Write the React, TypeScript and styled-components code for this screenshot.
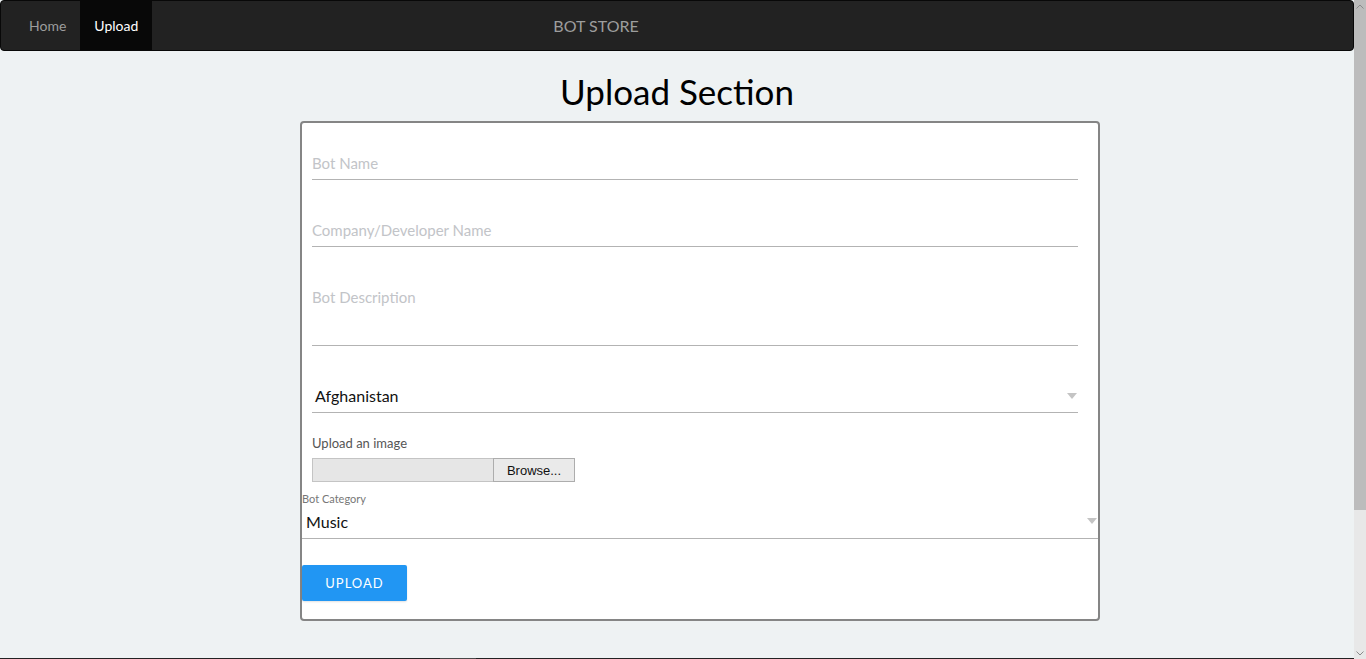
import React from 'react';
import styled, { createGlobalStyle } from 'styled-components';

const GlobalStyle = createGlobalStyle`
  body {
    margin: 0;
    background: #eef2f3;
    font-family: Lato, "Liberation Sans", sans-serif;
    color: #222;
  }
  * {
    box-sizing: border-box;
  }
`;

const Page = styled.div`
  margin-right: 12px;
`;

// page scrollbar, drawn since the browser hides native ones
const ScrollTrack = styled.div`
  position: fixed;
  top: 0;
  right: 0;
  width: 12px;
  height: 100vh;
  background: #e8e8e8;
  display: flex;
  flex-direction: column;
  justify-content: space-between;
`;

const ScrollThumb = styled.div`
  height: 510px;
  background: #bcbcbc;
  display: flex;
  justify-content: center;
  padding-top: 4px;
`;

const ScrollArrow = styled.div`
  display: flex;
  justify-content: center;
  padding-bottom: 3px;
`;

const Navbar = styled.nav`
  display: flex;
  align-items: stretch;
  height: 51px;
  background: #222;
  border: 1px solid #080808;
  border-radius: 4px;
`;

const NavLinks = styled.ul`
  display: flex;
  list-style: none;
  margin: 0;
  padding: 0 0 0 14px;
`;

const NavLink = styled.li<{ active?: boolean }>`
  display: flex;
  align-items: center;
  padding: 0 14px;
  font-size: 14px;
  color: ${(p) => (p.active ? '#fff' : '#9d9d9d')};
  background: ${(p) => (p.active ? '#080808' : 'transparent')};
`;

const Brand = styled.div`
  display: flex;
  align-items: center;
  margin-left: 401px;
  font-size: 16px;
  color: #9d9d9d;
`;

const Main = styled.main`
  display: flex;
  flex-direction: column;
  align-items: center;
  padding-bottom: 37px;
`;

const Title = styled.h1`
  margin: 20px 0 10px;
  font-size: 35px;
  font-weight: 400;
  line-height: 40px;
  color: #000;
`;

const FormRow = styled.div`
  padding-left: 46px;
`;

const FormCard = styled.form`
  width: 800px;
  background: #fff;
  border: 2px solid #858585;
  border-radius: 4px;
  padding: 11px 0 18px;
`;

const Padded = styled.div`
  padding: 0 20px 0 10px;
`;

const Field = styled.div<{ tall?: boolean }>`
  height: ${(p) => (p.tall ? '78px' : '46px')};
  margin-bottom: 21px;
  border-bottom: 1px solid #b3b3b3;
`;

const TextInput = styled.input`
  width: 100%;
  height: 45px;
  border: none;
  outline: none;
  padding: 18px 0 5px;
  font: inherit;
  font-size: 15px;
  line-height: 22px;
  background: transparent;
  &::placeholder {
    color: #c2c4c8;
  }
`;

const TextArea = styled.textarea`
  width: 100%;
  height: 77px;
  border: none;
  outline: none;
  resize: none;
  padding: 18px 0 5px;
  font: inherit;
  font-size: 15px;
  line-height: 22px;
  background: transparent;
  &::placeholder {
    color: #c2c4c8;
  }
`;

const SelectBox = styled.div<{ inset?: number; compact?: boolean }>`
  display: flex;
  align-items: center;
  justify-content: space-between;
  height: ${(p) => (p.compact ? '33px' : '46px')};
  padding: ${(p) => (p.compact ? '3px' : '17px')} 0 5px ${(p) => p.inset ?? 3}px;
  border-bottom: 1px solid #b3b3b3;
  font-size: 16px;
  color: #111;
`;

const Caret = styled.span`
  width: 0;
  height: 0;
  margin-right: 1px;
  border-left: 5px solid transparent;
  border-right: 5px solid transparent;
  border-top: 6px solid #c4c4c4;
`;

const Label = styled.label`
  display: block;
  margin: 22px 0 7px;
  font-size: 13px;
  color: #555;
`;

const FileRow = styled.div`
  display: flex;
  height: 24px;
  margin-bottom: 10px;
`;

const FilePath = styled.div`
  width: 181px;
  background: #e6e6e6;
  border: 1px solid #c4c4c4;
  border-right: none;
`;

const BrowseButton = styled.button`
  width: 82px;
  background: #eaeaea;
  border: 1px solid #adadad;
  font-family: "Liberation Sans", Arial, sans-serif;
  font-size: 13px;
  color: #111;
  padding: 0;
`;

const SmallLabel = styled.div`
  font-size: 11px;
  color: #777;
  line-height: 14px;
`;

const CategoryBlock = styled.div`
  margin-bottom: 26px;
`;

const UploadButton = styled.button`
  width: 105px;
  height: 36px;
  border: none;
  border-radius: 2px;
  background: #2196f3;
  color: #fff;
  font: inherit;
  font-size: 13px;
  letter-spacing: 1px;
  box-shadow: 0 1px 2px rgba(0, 0, 0, 0.12);
`;

const Footer = styled.footer`
  height: 190px;
  background: #222;
  display: flex;
  justify-content: center;
`;

const FooterTab = styled.div`
  width: 36px;
  height: 4px;
  margin-right: 438px;
  background: #474747;
`;

const Chevron: React.FC<{ up?: boolean }> = ({ up }) => (
  <svg width="8" height="5" viewBox="0 0 8 5">
    <path
      d={up ? 'M0.5 4.5 L4 1 L7.5 4.5' : 'M0.5 0.5 L4 4 L7.5 0.5'}
      fill="none"
      stroke="#8a8a8a"
      strokeWidth="1"
    />
  </svg>
);

const App: React.FC = () => {
  return (
    <>
      <GlobalStyle />
      <Page>
        <Navbar>
          <NavLinks>
            <NavLink>Home</NavLink>
            <NavLink active>Upload</NavLink>
          </NavLinks>
          <Brand>BOT STORE</Brand>
        </Navbar>
        <Main>
          <Title>Upload Section</Title>
          <FormRow>
            <FormCard onSubmit={(e) => e.preventDefault()}>
              <Padded>
                <Field>
                  <TextInput placeholder="Bot Name" />
                </Field>
                <Field>
                  <TextInput placeholder="Company/Developer Name" />
                </Field>
                <Field tall>
                  <TextArea placeholder="Bot Description" />
                </Field>
                <SelectBox>
                  <span>Afghanistan</span>
                  <Caret />
                </SelectBox>
                <Label>Upload an image</Label>
                <FileRow>
                  <FilePath />
                  <BrowseButton type="button">Browse...</BrowseButton>
                </FileRow>
              </Padded>
              <CategoryBlock>
                <SmallLabel>Bot Category</SmallLabel>
                <SelectBox inset={4} compact>
                  <span>Music</span>
                  <Caret />
                </SelectBox>
              </CategoryBlock>
              <UploadButton type="submit">UPLOAD</UploadButton>
            </FormCard>
          </FormRow>
        </Main>
        <Footer>
          <FooterTab />
        </Footer>
      </Page>
      <ScrollTrack>
        <ScrollThumb>
          <Chevron up />
        </ScrollThumb>
        <ScrollArrow>
          <Chevron />
        </ScrollArrow>
      </ScrollTrack>
    </>
  );
};

export default App;
